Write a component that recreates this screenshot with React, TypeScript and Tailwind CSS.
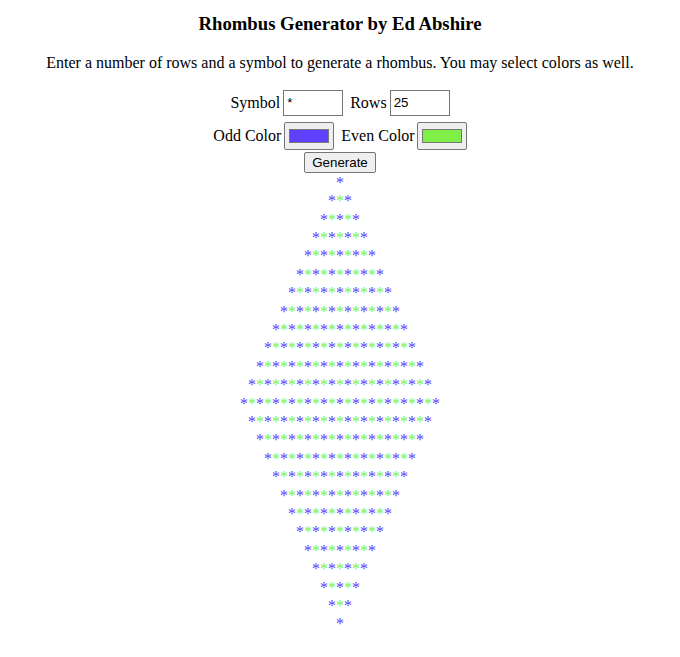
import React from "react";

const ODD = "#6040ff";
const EVEN = "#80f048";
const ROWS = 25;

// row widths: 1,3,5 ... up to middle, then back down
const buildRows = (rows: number) => {
  const mid = Math.ceil(rows / 2);
  const out: number[] = [];
  for (let i = 1; i <= rows; i++) {
    const n = i <= mid ? i : rows + 1 - i;
    out.push(n * 2 - 1);
  }
  return out;
};

const ColorBox = ({ color }: { color: string }) => (
  <div className="w-[50px] h-[28px] border border-[#767676] bg-[#efefef] rounded-[2px] flex items-center justify-center">
    <div className="w-[40px] h-[14px] border border-[#777]" style={{ background: color }} />
  </div>
);

const TextBox = ({ value }: { value: string }) => (
  <input
    readOnly
    value={value}
    className="w-[60px] h-[26px] border border-[#767676] bg-white px-[3px] text-[13.33px] font-['Liberation_Sans',Arial,sans-serif] text-black outline-none"
  />
);

export default function App() {
  const rows = buildRows(ROWS);
  return (
    <div className="w-full bg-white text-black font-['Liberation_Serif','Times_New_Roman',serif] text-[16px] leading-[18.4px] flex flex-col items-center">
      <h3 className="mt-[13px] text-[18.72px] leading-[21.5px] font-bold">Rhombus Generator by Ed Abshire</h3>
      <p className="mt-[19px]">Enter a number of rows and a symbol to generate a rhombus. You may select colors as well.</p>

      <div className="mt-[18px] h-[26px] flex items-center">
        <span>Symbol</span>
        <div className="ml-[3px]"><TextBox value="*" /></div>
        <span className="ml-[7px]">Rows</span>
        <div className="ml-[3px]"><TextBox value="25" /></div>
      </div>

      <div className="mt-[6px] h-[28px] flex items-center">
        <span>Odd Color</span>
        <div className="ml-[3px]"><ColorBox color={ODD} /></div>
        <span className="ml-[7px]">Even Color</span>
        <div className="ml-[2px]"><ColorBox color={EVEN} /></div>
      </div>

      <button className="mt-[2px] h-[21px] px-[7px] border border-[#767676] bg-[#efefef] rounded-[2px] text-[13.33px] leading-none font-['Liberation_Sans',Arial,sans-serif] text-black">
        Generate
      </button>

      <div className="mt-[1px] flex flex-col items-center">
        {rows.map((n, r) => (
          <div key={r} className="h-[18.4px] whitespace-nowrap">
            {Array.from({ length: n }).map((_, i) => (
              <span key={i} style={{ color: i % 2 === 0 ? ODD : EVEN }}>*</span>
            ))}
          </div>
        ))}
      </div>
    </div>
  );
}
